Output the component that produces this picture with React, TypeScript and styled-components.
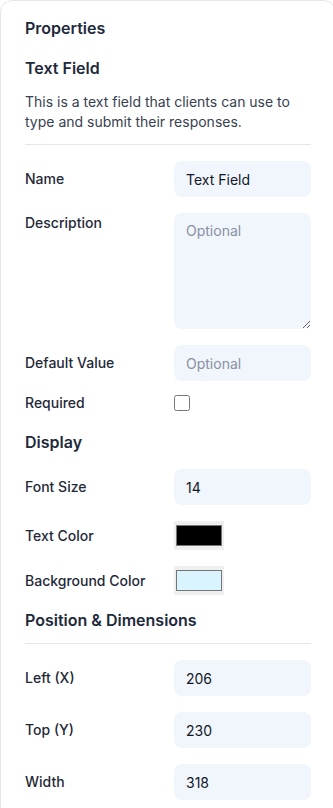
import React from 'react';
import styled, { createGlobalStyle } from 'styled-components';

const GlobalStyle = createGlobalStyle`
  html, body {
    margin: 0;
    padding: 0;
    background: #ffffff;
    overflow: hidden;
  }
  body {
    font-family: Inter, "Noto Sans", "Liberation Sans", sans-serif;
    -webkit-font-smoothing: antialiased;
  }
  * {
    box-sizing: border-box;
  }
`;

const Panel = styled.aside`
  width: 336px;
  min-height: 900px;
  background: #ffffff;
  border: 1px solid #e5e7eb;
  border-radius: 12px;
  padding: 15px 24px;
  display: flex;
  flex-direction: column;
`;

const Title = styled.h2<{ $mt?: number; $mb?: number }>`
  margin: ${(p) => p.$mt ?? 0}px 0 ${(p) => p.$mb ?? 0}px;
  font-size: 16px;
  line-height: 24px;
  font-weight: 600;
  color: #1e293b;
`;

const Description = styled.p`
  margin: 0 0 12px;
  font-size: 14px;
  line-height: 20px;
  color: #374151;
`;

const Divider = styled.hr<{ $mt?: number }>`
  margin: ${(p) => p.$mt ?? 0}px 0 16px;
  border: none;
  border-top: 1px solid #e5e7eb;
  height: 0;
`;

const Fields = styled.div`
  display: flex;
  flex-direction: column;
  gap: 16px;
`;

const Row = styled.label<{ $align?: 'start' | 'center'; $tight?: boolean }>`
  display: grid;
  grid-template-columns: 1fr 1fr;
  column-gap: 12px;
  align-items: ${(p) => (p.$align === 'start' ? 'start' : 'center')};
  margin-top: ${(p) => (p.$tight ? '-4px' : '0')};
`;

const Label = styled.span`
  font-size: 14px;
  line-height: 20px;
  font-weight: 500;
  color: #1f2937;
`;

const TextInput = styled.input`
  width: 100%;
  height: 36px;
  padding: 0 12px;
  border: none;
  border-radius: 8px;
  background: #f1f5fc;
  font-family: inherit;
  font-size: 14px;
  color: #111827;
  outline: none;

  &::placeholder {
    color: #8891a2;
  }
`;

const TextArea = styled.textarea`
  width: 100%;
  height: 116px;
  padding: 8px 12px;
  border: none;
  border-radius: 8px;
  background: #f1f5fc;
  font-family: inherit;
  font-size: 14px;
  line-height: 20px;
  color: #111827;
  resize: vertical;
  outline: none;
  display: block;

  &::placeholder {
    color: #8891a2;
  }
`;

const Checkbox = styled.input.attrs({ type: 'checkbox' })`
  width: 16px;
  height: 16px;
  margin: 0;
`;

const ColorInput = styled.input.attrs({ type: 'color' })`
  width: 50px;
  height: 29px;
  padding: 0;
  border: none;
  background: #efefef;
  cursor: pointer;

  &::-webkit-color-swatch-wrapper {
    padding: 4px 2px;
  }
  &::-webkit-color-swatch {
    border: 1px solid #767676;
    border-radius: 0;
  }
`;

const App: React.FC = () => {
  return (
    <>
      <GlobalStyle />
      <Panel>
        <Title $mb={16}>Properties</Title>
        <Title $mb={12}>Text Field</Title>
        <Description>
          This is a text field that clients can use to type and submit their responses.
        </Description>
        <Divider />

        <Fields>
          <Row>
            <Label>Name</Label>
            <TextInput defaultValue="Text Field" />
          </Row>
          <Row $align="start">
            <Label>Description</Label>
            <TextArea placeholder="Optional" />
          </Row>
          <Row>
            <Label>Default Value</Label>
            <TextInput placeholder="Optional" />
          </Row>
          <Row $tight>
            <Label>Required</Label>
            <Checkbox />
          </Row>
        </Fields>

        <Title $mt={17} $mb={15}>Display</Title>
        <Fields>
          <Row>
            <Label>Font Size</Label>
            <TextInput defaultValue="14" />
          </Row>
          <Row>
            <Label>Text Color</Label>
            <ColorInput defaultValue="#000000" />
          </Row>
          <Row>
            <Label>Background Color</Label>
            <ColorInput defaultValue="#d9f3ff" />
          </Row>
        </Fields>

        <Title $mt={13}>Position &amp; Dimensions</Title>
        <Divider $mt={11} />
        <Fields>
          <Row>
            <Label>Left (X)</Label>
            <TextInput defaultValue="206" />
          </Row>
          <Row>
            <Label>Top (Y)</Label>
            <TextInput defaultValue="230" />
          </Row>
          <Row>
            <Label>Width</Label>
            <TextInput defaultValue="318" />
          </Row>
        </Fields>
      </Panel>
    </>
  );
};

export default App;
